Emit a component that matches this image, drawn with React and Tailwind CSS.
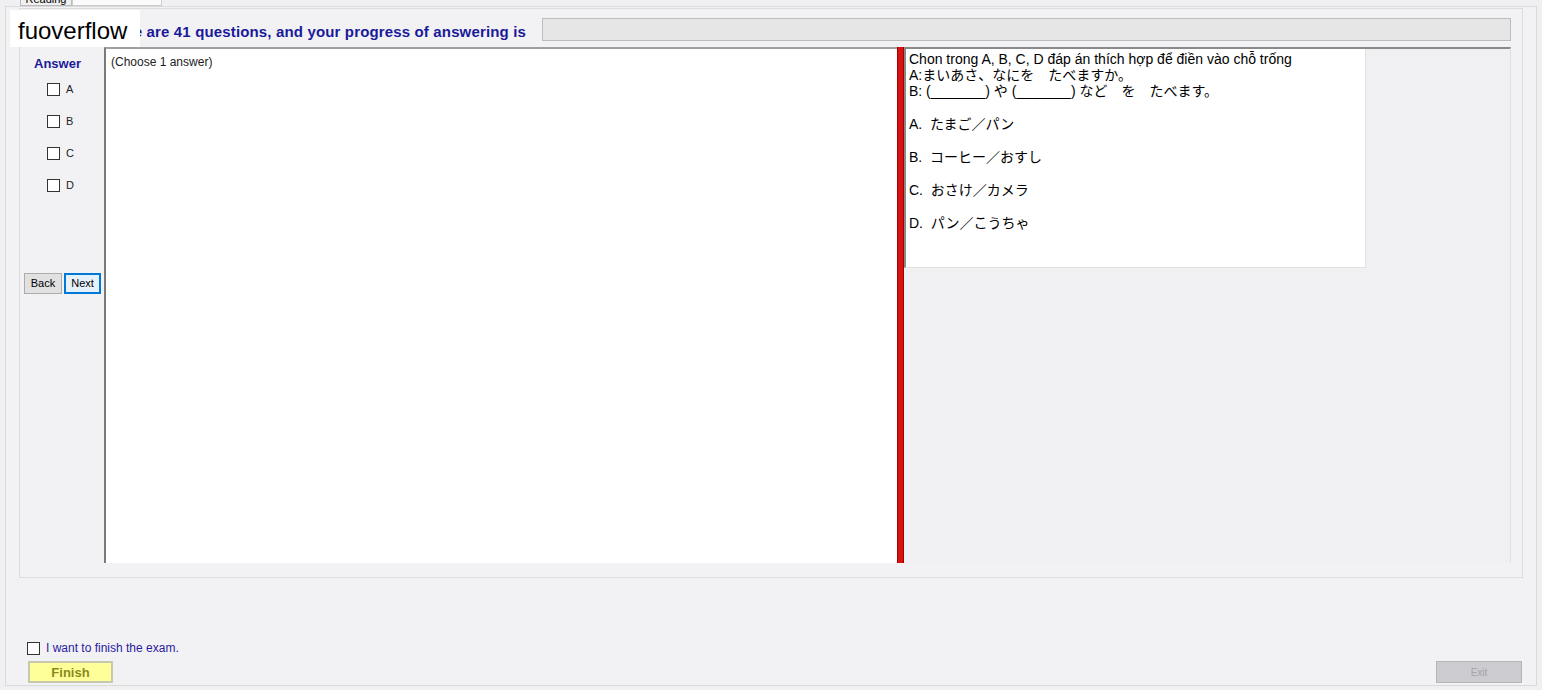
const ui = { fontFamily: '"Liberation Sans", Arial, sans-serif' };
const jp = { fontFamily: '"Liberation Sans", Arial, "Noto Sans CJK JP", sans-serif' };

function Box() {
  return <span className="inline-block w-[13px] h-[13px] border border-[#333] bg-white" />;
}

const choices = ['A', 'B', 'C', 'D'];
const options = [
  ['A.', 'たまご／パン'],
  ['B.', 'コーヒー／おすし'],
  ['C.', 'おさけ／カメラ'],
  ['D.', 'パン／こうちゃ'],
];

export default function App() {
  return (
    <div className="relative w-[1542px] h-[690px] bg-[#f0f0f2] overflow-hidden" style={ui}>
      {/* tabs, cut off at top */}
      <div className="flex h-[6px] pl-[20px] text-[11px] leading-none">
        <div className="w-[52px] border border-t-0 border-[#bbb] bg-[#f0f0f0] overflow-hidden flex items-end justify-center">Reading</div>
        <div className="w-[90px] border border-t-0 border-[#ccc] bg-[#fbfbfb]" />
      </div>

      <div className="mx-[5px] h-[680px] border border-[#dadada] bg-[#f2f2f4] px-[13px] pt-[1px]">
        <div className="h-[570px] border border-[#dcdcdc] flex flex-col">
          <div className="flex items-center h-[38px] pt-[2px]">
            <div className="w-[506px] text-right text-[15px] tracking-[0.15px] font-bold text-[#1a1a9a] pt-[6px] whitespace-nowrap">
              There are 41 questions, and your progress of answering is
            </div>
            <div className="ml-[16px] w-[969px] h-[23px] bg-[#e6e6e6] border border-[#bcbcbc]" />
          </div>

          <div className="flex h-[516px]">
            <div className="w-[84px] pl-[4px] flex flex-col">
              <div className="pl-[10px] pt-[7px] text-[13px] font-bold text-[#1a1a9a]">Answer</div>
              <div className="flex flex-col gap-[19px] pl-[23px] pt-[9px]">
                {choices.map(c => (
                  <div key={c} className="flex items-center h-[13px] gap-[6px] text-[11px] leading-none text-[#222]">
                    <Box /> {c}
                  </div>
                ))}
              </div>
              <div className="flex gap-[2px] mt-[81px]">
                <button className="w-[38px] h-[21px] bg-[#e1e1e1] border border-[#adadad] text-[11px]">Back</button>
                <button className="w-[37px] h-[21px] bg-[#e5f1fb] border-2 border-[#0078d7] text-[11px]">Next</button>
              </div>
            </div>

            <div className="w-[793px] bg-white border-l-2 border-t-2 border-l-[#7a7a7a] border-t-[#a0a0a0] px-[5px] pt-[4px] text-[12px] text-[#222]">
              (Choose 1 answer)
            </div>

            <div className="w-[7px] bg-[#d81212] border-x border-[#a00000]" />

            <div className="w-[607px] bg-[#f0f0f2] border-t-2 border-[#8a8a8a] border-r border-r-[#e0e0e0]">
              <div className="w-[462px] h-[219px] bg-white border-l-2 border-l-[#8a8a8a] border-r border-b border-[#e0e0e0] pl-[3px] pt-[2px] text-[14px] leading-[16px] text-black" style={jp}>
                <div>Chon trong A, B, C, D đáp án thích hợp để điền vào chỗ trống</div>
                <div>A:まいあさ、なにを　たべますか。</div>
                <div>B: (_______) や (_______) など　を　たべます。</div>
                <div className="flex flex-col gap-[17px] mt-[17px]">
                  {options.map(([k, v]) => (
                    <div key={k}>{k}&nbsp; {v}</div>
                  ))}
                </div>
              </div>
            </div>
          </div>
        </div>

        <div className="mt-[61px] flex items-center gap-[6px] pl-[8px] text-[12px] text-[#2a1aa0]">
          <Box /> I want to finish the exam.
        </div>
        <div className="flex justify-between items-end mt-[4px] pl-[9px] pr-[1px]">
          <button className="w-[85px] h-[22px] bg-[#ffff99] border-2 border-[#c8c8b0] text-[13px] font-bold text-[#8a8a1a]">Finish</button>
          <button className="w-[86px] h-[22px] bg-[#cbcbd0] border border-[#b5b5b5] text-[10px] text-[#a5a5a5]">Exit</button>
        </div>
      </div>

      <div className="absolute left-[10px] top-[10px] w-[130px] h-[37px] bg-white flex items-center pl-[8px] pt-[4px] text-[24px] text-black">
        fuoverflow
      </div>
    </div>
  );
}
